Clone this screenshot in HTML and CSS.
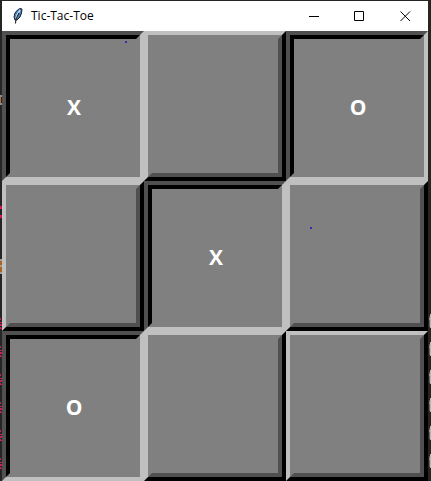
FILE: index.html
```html
<!DOCTYPE html>
<html lang="en">
<head>
<meta charset="utf-8">
<title>Tic-Tac-Toe</title>
<link rel="stylesheet" href="styles.css">
</head>
<body>
<div class="desktop">
  <svg class="edge edge-left" width="2" height="481" aria-hidden="true">
    <defs>
      <g id="code-mark"><path d="M0 0h1v2h-1zM0 4h2v1h-2zM0 6h2v2h-2zM0 9h1v1h-1zM0 10h2v1h-2z" fill="#c81e62"/></g>
    </defs>
    <path d="M0 95h2v2h-2zM0 103h2v2h-2z" fill="#8e8d83"/><path d="M0 97h1v6h-1z" fill="#b86b36"/>
    <path d="M0 206h2v3h-2zM0 215h2v3h-2z" fill="#d01a62"/>
    <path d="M0 259h2v2h-2zM0 265h2v2h-2zM0 272h2v2h-2z" fill="#a0a09a"/><path d="M0 261h2v4h-2zM0 267h2v5h-2z" fill="#a86420"/>
    <use href="#code-mark" y="318"/><use href="#code-mark" y="346"/><use href="#code-mark" y="374"/><use href="#code-mark" y="402"/><use href="#code-mark" y="430"/><use href="#code-mark" y="458"/>
  </svg>
  <main class="window">
    <header class="titlebar">
      <svg class="feather" width="10" height="16" viewBox="0 0 10 16" aria-hidden="true">
        <path d="M7 .5L9 1L8.500 5L7 9L4 12L2 12L1 9L2 5L4.500 2Z" fill="#4d83bd" stroke="#15202d"/>
        <path d="M7 2L4 7L3 11" fill="none" stroke="#b7d8f4" stroke-width="1.500"/>
        <path d="M6 5L3 11L2.500 15.500" fill="none" stroke="#111" stroke-width="1"/>
      </svg>
      <h1 class="title">Tic-Tac-Toe</h1>
      <div class="controls">
        <button class="control" aria-label="Minimize"><svg width="11" height="11" viewBox="0 0 11 11"><path d="M1 5.500H11"/></svg></button>
        <button class="control" aria-label="Maximize"><svg width="11" height="11" viewBox="0 0 11 11"><path d="M.5 .5H9.500V9.500H.5Z"/></svg></button>
        <button class="control" aria-label="Close"><svg width="11" height="11" viewBox="0 0 11 11"><path d="M.5 .5L10 10M10 .5L.5 10"/></svg></button>
      </div>
    </header>
    <div class="board">
      <button class="cell pressed"><span class="face">X</span></button>
      <button class="cell" aria-label="Empty"><span class="face"></span></button>
      <button class="cell pressed"><span class="face">O</span></button>
      <button class="cell" aria-label="Empty"><span class="face"></span></button>
      <button class="cell pressed"><span class="face">X</span></button>
      <button class="cell" aria-label="Empty"><span class="face"></span></button>
      <button class="cell pressed"><span class="face">O</span></button>
      <button class="cell" aria-label="Empty"><span class="face"></span></button>
      <button class="cell" aria-label="Empty"><span class="face"></span></button>
      <i class="speck speck-top"></i>
      <i class="speck speck-middle"></i>
    </div>
  </main>
  <svg class="edge edge-right" width="3" height="481" aria-hidden="true">
    <defs><g id="right-mark"><path d="M2 0h1v14h-1z" fill="#b9b9a9"/><path d="M1 2h1v11h-1z" fill="#526975"/><path d="M1 4h1v2h-1z" fill="#9c8d83"/></g></defs>
    <use href="#right-mark" y="314"/><use href="#right-mark" y="342"/><use href="#right-mark" y="370"/><use href="#right-mark" y="398"/><use href="#right-mark" y="426"/><use href="#right-mark" y="454"/>
  </svg>
</div>
</body>
</html>
```
FILE: styles.css
```css
* { box-sizing: border-box; }
body { margin: 0; background: #272822; }
.desktop {
  display: grid;
  grid-template-columns: 2px 1fr 3px;
  height: 100vh;
  overflow: hidden;
  background: #252622;
}
.window {
  display: flex;
  flex-direction: column;
  min-width: 0;
  padding-top: 1px;
}
.titlebar {
  display: flex;
  align-items: center;
  flex: 0 0 30px;
  padding-left: 11px;
  background: #fff;
}
.title {
  flex: 1;
  margin: 0 0 0 8px;
  font: 400 12px/16px "Open Sans", "Noto Sans", sans-serif;
  color: #000;
}
.controls { display: flex; }
.control {
  display: grid;
  place-items: center;
  width: 46px;
  height: 30px;
  padding: 0;
  border: 0;
  background: none;
}
.control path { fill: none; stroke: #000; stroke-width: 1; }
.board {
  position: relative;
  display: grid;
  flex: 1;
  grid-template-columns: repeat(3, 1fr);
  grid-template-rows: repeat(3, 1fr);
}
.cell {
  display: flex;
  min-width: 0;
  padding: 0;
  border: 4px solid;
  border-color: #c0c0c0 #000 #000 #c0c0c0;
  border-radius: 0;
  background: #808080;
  color: #fff;
  font: 700 21px/24px "Open Sans", "Noto Sans", sans-serif;
}
.face {
  display: flex;
  flex: 1;
  align-self: stretch;
  align-items: center;
  justify-content: center;
  border: 4px solid;
  border-color: #808080 #505050 #505050 #808080;
}
.pressed { border-color: #505050 #c0c0c0 #c0c0c0 #505050; }
.pressed .face {
  padding: 2px 0 0 2px;
  border-color: #000 #808080 #808080 #000;
}
.speck {
  position: absolute;
  width: 2px;
  height: 2px;
  background: #3030b0;
}
.speck-top { left: 123px; top: 10px; }
.speck-middle { left: 308px; top: 196px; }
```
